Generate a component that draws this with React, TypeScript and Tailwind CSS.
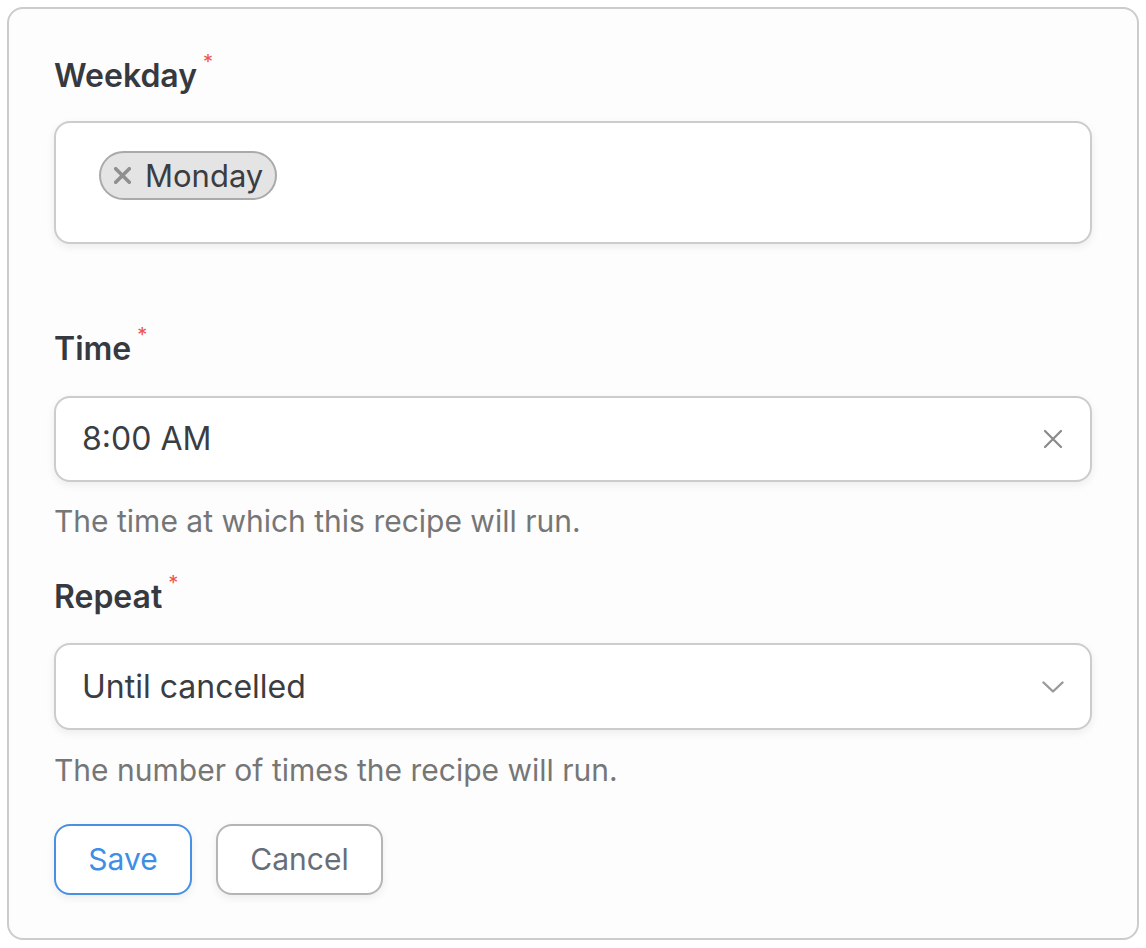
import React from 'react';

const Label = ({ children }: { children: React.ReactNode }) => (
  <div className="flex items-start h-[40px]">
    <span className="text-[32px] leading-[40px] font-semibold text-[#363a40]">{children}</span>
    <span className="ml-[6px] text-[20px] leading-[20px] text-[#ef5350] -mt-[4px]">*</span>
  </div>
);

const Cross = ({ size, stroke, color }: { size: number; stroke: number; color: string }) => (
  <svg width={size} height={size} viewBox="0 0 20 20" fill="none" stroke={color} strokeWidth={stroke} strokeLinecap="round">
    <path d="M2 2L18 18M18 2L2 18" />
  </svg>
);

export default function App() {
  return (
    <div className="bg-white min-h-screen pt-[7px] pl-[7px]" style={{ fontFamily: 'Inter, "Liberation Sans", sans-serif' }}>
      <div className="w-[1132px] border-2 border-[#cccccc] rounded-[16px] bg-[#fdfdfd] pt-[47px] px-[45px] pb-[43px]">
        <Label>Weekday</Label>
        <div className="mt-[25px] h-[123px] border-2 border-[#cccccc] rounded-[16px] bg-white shadow-[0_3px_8px_rgba(0,0,0,0.07)] pt-[28px] pl-[43px]">
          <div className="inline-flex items-center h-[49px] pl-[13px] pr-[12px] gap-[14px] rounded-full bg-[#e4e4e4] border-2 border-[#aaaaaa]">
            <Cross size={17} stroke={4.2} color="#8f8f8f" />
            <span className="text-[31px] leading-none text-[#3a3d42]">Monday</span>
          </div>
        </div>

        <div className="mt-[85px]">
          <Label>Time</Label>
        </div>
        <div className="mt-[27px] h-[86px] flex items-center justify-between border-2 border-[#cccccc] rounded-[16px] bg-white shadow-[0_3px_8px_rgba(0,0,0,0.07)] pl-[26px] pr-[27px]">
          <span className="text-[32px] text-[#3a3d42]">8:00 AM</span>
          <Cross size={20} stroke={2.2} color="#8a8a8a" />
        </div>
        <p className="mt-[21px] text-[30px] leading-[36px] text-[#767676]">The time at which this recipe will run.</p>

        <div className="mt-[38px]">
          <Label>Repeat</Label>
        </div>
        <div className="mt-[26px] h-[87px] flex items-center justify-between border-2 border-[#cccccc] rounded-[16px] bg-white shadow-[0_3px_8px_rgba(0,0,0,0.07)] pl-[26px] pr-[26px]">
          <span className="text-[32px] text-[#3a3d42]">Until cancelled</span>
          <svg width="22" height="12" viewBox="0 0 22 12" fill="none" stroke="#9a9a9a" strokeWidth={2.4} strokeLinecap="round" strokeLinejoin="round">
            <path d="M1.5 1.5L11 10.5L20.5 1.5" />
          </svg>
        </div>
        <p className="mt-[22px] text-[30px] leading-[36px] text-[#767676]">The number of times the recipe will run.</p>

        <div className="mt-[36px] flex gap-[24px]">
          <button className="w-[138px] h-[71px] rounded-[16px] border-2 border-[#4a90e2] bg-white text-[30px] text-[#3d8fe5] shadow-[0_3px_8px_rgba(0,0,0,0.07)]">Save</button>
          <button className="w-[167px] h-[71px] rounded-[16px] border-2 border-[#b5b5b5] bg-white text-[30px] text-[#686e78] shadow-[0_3px_8px_rgba(0,0,0,0.07)]">Cancel</button>
        </div>
      </div>
    </div>
  );
}
